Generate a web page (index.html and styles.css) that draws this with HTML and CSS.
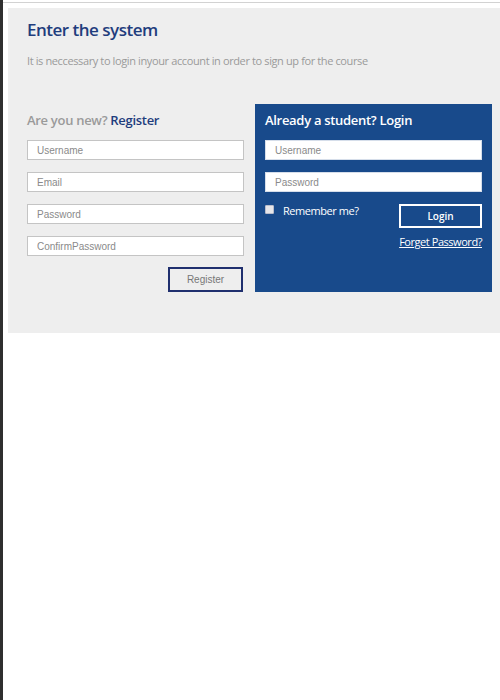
FILE: index.html
```html
<!DOCTYPE html>
<html lang="en">
<head>
<meta charset="utf-8">
<title>Enter the system</title>
<link rel="stylesheet" href="styles.css">
</head>
<body>
<div class="topline"></div>
<main class="panel">
  <h1 class="title">Enter the system</h1>
  <p class="lead">It is neccessary to login inyour account in order to sign up for the course</p>
  <div class="cols">
    <section class="reg">
      <h2 class="heading"><span class="muted">Are you new?</span> Register</h2>
      <input class="field" type="text" placeholder="Username">
      <input class="field" type="text" placeholder="Email">
      <input class="field" type="password" placeholder="Password">
      <input class="field" type="password" placeholder="ConfirmPassword">
      <div class="actions">
        <button class="btn btn-reg" type="button">Register</button>
      </div>
    </section>
    <section class="login">
      <h2 class="heading heading-light">Already a student? Login</h2>
      <input class="field field-light" type="text" placeholder="Username">
      <input class="field field-light" type="password" placeholder="Password">
      <div class="row">
        <label class="remember"><input class="check" type="checkbox"><span>Remember me?</span></label>
        <button class="btn btn-login" type="button">Login</button>
      </div>
      <a class="forgot" href="#">Forget Password?</a>
    </section>
  </div>
</main>
</body>
</html>
```

FILE: styles.css
```css
* { box-sizing: border-box; }
html, body { margin: 0; padding: 0; }
body {
  background: #ffffff;
  border-left: 3px solid #2f2f2f;
  min-height: 700px;
  font-family: "Open Sans", "Liberation Sans", sans-serif;
}
.topline {
  height: 1px;
  margin-top: 2px;
  background: #d2d2d2;
}
.panel {
  margin: 5px 0 0 5px;
  background: #eeeeee;
  padding: 11px 8px 41px 19px;
}
.title {
  margin: 0;
  font-size: 17px;
  line-height: 22px;
  font-weight: 600;
  letter-spacing: -0.5px;
  color: #1f3d7d;
}
.lead {
  margin: 13px 0 0;
  font-size: 11px;
  line-height: 14px;
  letter-spacing: -0.38px;
  color: #9a9a9a;
}
.cols {
  margin-top: 36px;
  display: grid;
  grid-template-columns: 217px 237px;
  column-gap: 11px;
}
.reg { padding-top: 8px; }
.login {
  background: #184a8b;
  padding: 8px 10px 10px;
}
.heading {
  margin: 0 0 12px;
  font-size: 13px;
  line-height: 16px;
  font-weight: 600;
  letter-spacing: -0.3px;
  color: #1f3d7d;
}
.muted { color: #9a9a9a; }
.heading-light { color: #ffffff; }
.field {
  display: block;
  width: 217px;
  height: 20px;
  margin: 0 0 12px;
  padding: 0 9px;
  border: 1px solid #c4c4c4;
  background: #ffffff;
  font-family: "Liberation Sans", Arial, sans-serif;
  font-size: 10px;
  color: #555;
  outline: none;
}
.field::placeholder { color: #8a8a8a; }
.field-light { border-color: #d6deea; }
.actions {
  display: flex;
  justify-content: flex-end;
  padding-right: 1px;
  margin-top: -1px;
}
.btn {
  cursor: pointer;
  font-size: 10px;
}
.btn-reg {
  width: 75px;
  height: 25px;
  background: #eeeeee;
  border: 2px solid #1f2f6e;
  color: #777;
  font-family: "Liberation Sans", Arial, sans-serif;
}
.row {
  display: flex;
  justify-content: space-between;
  align-items: flex-start;
}
.remember {
  display: flex;
  align-items: flex-start;
  color: #ffffff;
  font-size: 11px;
  line-height: 14px;
  letter-spacing: -0.45px;
}
.check {
  appearance: none;
  -webkit-appearance: none;
  width: 9px;
  height: 9px;
  margin: 1px 9px 0 0;
  background: #e6e6ea;
  border: 1px solid #b8bccb;
  border-radius: 1px;
}
.btn-login {
  width: 83px;
  height: 24px;
  background: transparent;
  border: 2px solid #ffffff;
  color: #ffffff;
  font-family: "Open Sans", sans-serif;
  font-weight: 600;
}
.forgot {
  display: block;
  margin-top: 7px;
  text-align: right;
  color: #ffffff;
  font-size: 11px;
  line-height: 14px;
  letter-spacing: -0.45px;
  text-decoration: underline;
}
```
